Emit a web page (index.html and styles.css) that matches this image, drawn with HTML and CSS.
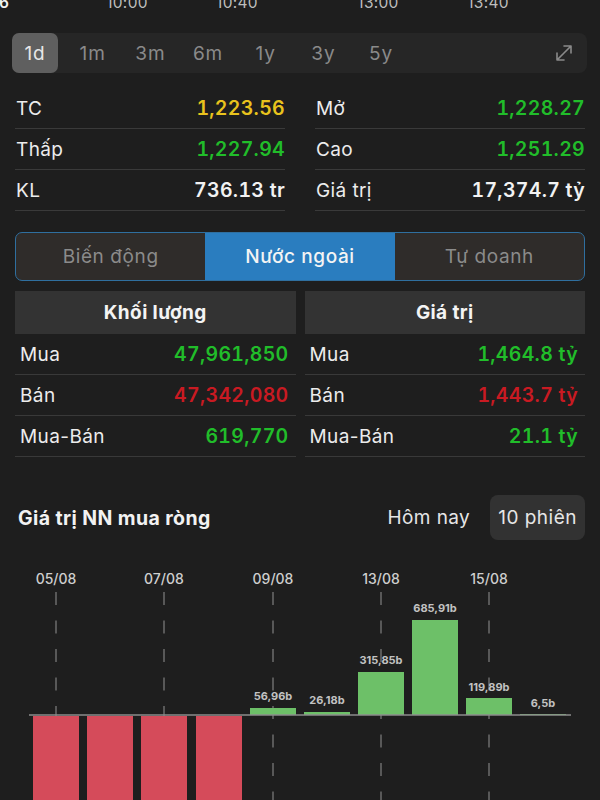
FILE: index.html
```html
<!DOCTYPE html>
<html lang="vi">
<head>
<meta charset="utf-8">
<title>Nước ngoài</title>
<link rel="stylesheet" href="styles.css">
</head>
<body>
<svg class="axis" width="600" height="12" viewBox="0 0 600 12">
  <text x="-1" y="8" class="axis-first">6</text>
  <text x="127" y="8" text-anchor="middle">10:00</text>
  <text x="237" y="8" text-anchor="middle">10:40</text>
  <text x="378" y="8" text-anchor="middle">13:00</text>
  <text x="488" y="8" text-anchor="middle">13:40</text>
</svg>

<div class="ranges">
  <span class="range active">1d</span>
  <span class="range">1m</span>
  <span class="range">3m</span>
  <span class="range">6m</span>
  <span class="range">1y</span>
  <span class="range">3y</span>
  <span class="range">5y</span>
  <span class="expand">
    <svg width="22" height="22" viewBox="0 0 22 22"><path d="M4 18 L18 4 M11 4 H18 V11 M4 11 V18 H11" fill="none" stroke="#8a8a8a" stroke-width="1.6" stroke-linecap="round" stroke-linejoin="round"/></svg>
  </span>
</div>

<div class="stats">
  <div class="stat"><span class="lbl">TC</span><span class="val yellow">1,223.56</span></div>
  <div class="stat"><span class="lbl">Mở</span><span class="val green">1,228.27</span></div>
  <div class="stat"><span class="lbl">Thấp</span><span class="val green">1,227.94</span></div>
  <div class="stat"><span class="lbl">Cao</span><span class="val green">1,251.29</span></div>
  <div class="stat"><span class="lbl">KL</span><span class="val white">736.13 tr</span></div>
  <div class="stat"><span class="lbl">Giá trị</span><span class="val white">17,374.7 tỷ</span></div>
</div>

<div class="segments">
  <span class="seg">Biến động</span>
  <span class="seg active">Nước ngoài</span>
  <span class="seg">Tự doanh</span>
</div>

<div class="tables">
  <div class="table">
    <div class="thead">Khối lượng</div>
    <div class="trow"><span class="lbl">Mua</span><span class="val green">47,961,850</span></div>
    <div class="trow"><span class="lbl">Bán</span><span class="val red">47,342,080</span></div>
    <div class="trow"><span class="lbl">Mua-Bán</span><span class="val green">619,770</span></div>
  </div>
  <div class="table">
    <div class="thead">Giá trị</div>
    <div class="trow"><span class="lbl">Mua</span><span class="val green">1,464.8 tỷ</span></div>
    <div class="trow"><span class="lbl">Bán</span><span class="val red">1,443.7 tỷ</span></div>
    <div class="trow"><span class="lbl">Mua-Bán</span><span class="val green">21.1 tỷ</span></div>
  </div>
</div>

<div class="chart-head">
  <span class="chart-title">Giá trị NN mua ròng</span>
  <div class="toggles">
    <span class="toggle">Hôm nay</span>
    <span class="toggle active">10 phiên</span>
  </div>
</div>

<svg class="chart" width="600" height="260" viewBox="0 540 600 260">
  <g class="dates">
    <text x="56" y="584">05/08</text>
    <text x="164" y="584">07/08</text>
    <text x="273" y="584">09/08</text>
    <text x="381" y="584">13/08</text>
    <text x="489" y="584">15/08</text>
  </g>
  <g class="grid">
    <line x1="56" y1="592" x2="56" y2="800"/>
    <line x1="164" y1="592" x2="164" y2="800"/>
    <line x1="273" y1="592" x2="273" y2="800"/>
    <line x1="381" y1="592" x2="381" y2="800"/>
    <line x1="489" y1="592" x2="489" y2="800"/>
  </g>
  <g class="neg">
    <rect x="33" y="716" width="46" height="90"/>
    <rect x="87" y="716" width="46" height="90"/>
    <rect x="141" y="716" width="46" height="90"/>
    <rect x="196" y="716" width="46" height="90"/>
  </g>
  <g class="pos">
    <rect x="250" y="708" width="46" height="7"/>
    <rect x="304" y="712" width="46" height="3"/>
    <rect x="358" y="672" width="46" height="43"/>
    <rect x="412" y="620" width="46" height="95"/>
    <rect x="466" y="698" width="46" height="17"/>
    <rect x="520" y="714" width="46" height="1"/>
  </g>
  <line class="base" x1="29" y1="715" x2="571" y2="715"/>
  <g class="vals">
    <text x="273" y="700">56,96b</text>
    <text x="327" y="704">26,18b</text>
    <text x="381" y="664">315,85b</text>
    <text x="435" y="612">685,91b</text>
    <text x="489" y="691">119,89b</text>
    <text x="543" y="707">6,5b</text>
  </g>
</svg>
</body>
</html>
```

FILE: styles.css
```css
* { box-sizing: border-box; }

html, body {
  margin: 0;
  padding: 0;
  background: #1e1e1e;
  overflow: hidden;
}

body {
  width: 600px;
  height: 800px;
  font-family: Inter, "Noto Sans", "Liberation Sans", sans-serif;
  color: #ececec;
  font-size: 19px;
  letter-spacing: 0.4px;
}

.axis {
  display: block;
  font-size: 15.5px;
  letter-spacing: 0.3px;
  fill: #bdbdbd;
}

.axis-first {
  fill: #f2f2f2;
  font-weight: 600;
}

.ranges {
  display: flex;
  align-items: center;
  gap: 11.7px;
  height: 40px;
  margin: 21px 13px 0 12px;
  background: #262626;
  border-radius: 8px;
}

.range {
  width: 46px;
  height: 40px;
  display: flex;
  align-items: center;
  justify-content: center;
  font-size: 19px;
  letter-spacing: 0.9px;
  color: #8a8a8a;
  border-radius: 7px;
}

.range.active {
  background: #5f5f5f;
  color: #e6e6e6;
}

.expand {
  margin-left: auto;
  margin-right: 12px;
  display: flex;
  align-items: center;
}

.stats {
  display: grid;
  grid-template-columns: 1fr 1fr;
  column-gap: 30px;
  margin: 15px 15px 0 15px;
}

.stat {
  display: flex;
  align-items: center;
  justify-content: space-between;
  height: 41px;
  border-bottom: 1px solid #3a3a3a;
}

.stat .lbl { padding-left: 1px; }

.val {
  font-size: 19.5px;
  font-weight: 600;
  letter-spacing: 0.3px;
  font-variant-numeric: tabular-nums;
}

.yellow { color: #e9c31d; }
.green { color: #21bd2a; }
.red { color: #c91a22; }
.white { color: #f2f2f2; }

.segments {
  display: flex;
  margin: 21px 15px 0 15px;
  height: 49px;
  border: 1.5px solid #2f6f9f;
  border-radius: 7px;
  overflow: hidden;
  background: #2f2c2a;
}

.seg {
  flex: 1;
  display: flex;
  align-items: center;
  justify-content: center;
  letter-spacing: 0.6px;
  color: #8b8b8b;
}

.seg.active {
  background: #2a7dbf;
  color: #f4f4f4;
  font-weight: 500;
}

.tables {
  display: grid;
  grid-template-columns: 1fr 1fr;
  column-gap: 9px;
  margin: 10px 15px 0 15px;
}

.thead {
  height: 43px;
  display: flex;
  align-items: center;
  justify-content: center;
  background: #333333;
  font-weight: 700;
  color: #f4f4f4;
}

.trow {
  display: flex;
  align-items: center;
  justify-content: space-between;
  height: 41px;
  padding: 0 7px 0 5px;
  border-bottom: 1px solid #393939;
}

.chart-head {
  display: flex;
  align-items: center;
  justify-content: space-between;
  margin: 38px 15px 0 18px;
  height: 45px;
}

.chart-title {
  font-size: 19.5px;
  font-weight: 700;
  letter-spacing: 0.4px;
  color: #f2f2f2;
}

.toggles {
  display: flex;
  gap: 12px;
  height: 45px;
}

.toggle {
  display: flex;
  align-items: center;
  padding: 0 8px;
  border-radius: 8px;
  color: #e6e6e6;
}

.toggle.active {
  background: #323232;
  letter-spacing: 0.5px;
}

.chart {
  display: block;
  letter-spacing: 0;
}

.dates text {
  font-size: 14px;
  font-weight: 500;
  fill: #cfcfcf;
  text-anchor: middle;
}

.grid line {
  stroke: #6c6c6c;
  stroke-width: 1.5;
  stroke-dasharray: 13 15.5;
}

.neg rect { fill: #d54b5a; }
.pos rect { fill: #6dc068; }

.base {
  stroke: #8c8c8c;
  stroke-width: 1.5;
}

.vals text {
  font-size: 11px;
  font-weight: 700;
  fill: #c2c2c2;
  text-anchor: middle;
}
```
